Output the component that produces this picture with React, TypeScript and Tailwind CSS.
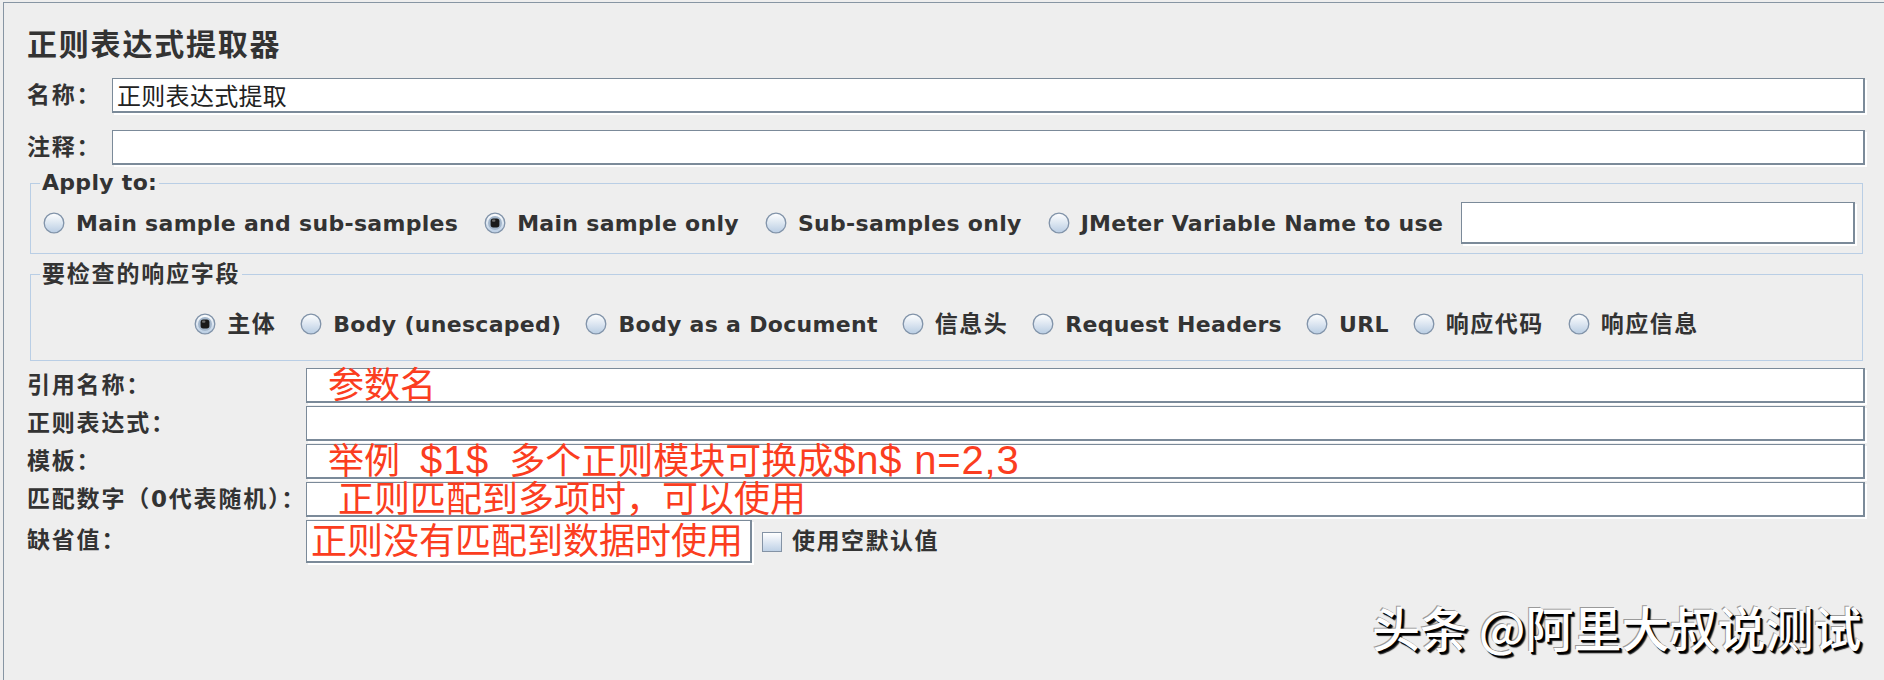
import React from 'react';

function Radio({ checked = false }: { checked?: boolean }) {
  return (
    <svg width="22" height="22" viewBox="0 0 22 22" className="shrink-0">
      <defs>
        <linearGradient id="radioFill" x1="0" y1="0" x2="0" y2="1">
          <stop offset="0" stopColor="#ffffff" />
          <stop offset="1" stopColor="#b9cde3" />
        </linearGradient>
      </defs>
      <circle cx="11" cy="11" r="9.8" fill="url(#radioFill)" stroke="#8193a9" strokeWidth="1.3" />
      {checked && (
        <>
          <circle cx="11" cy="11" r="7" fill="#a3b6cb" />
          <rect x="6.6" y="6.6" width="8.8" height="8.8" rx="2.6" fill="#1a1a1a" />
          <rect x="8" y="7.6" width="3.4" height="2.2" rx="1" fill="#6a6a6a" />
        </>
      )}
    </svg>
  );
}

function Field({ className = '', children }: { className?: string; children?: React.ReactNode }) {
  return (
    <div
      className={
        'bg-white border-t border-l border-b-2 border-r-2 border-[#7b8a99] shadow-[2px_2px_0_#ffffff] flex items-center overflow-visible whitespace-pre ' +
        className
      }
    >
      {children}
    </div>
  );
}

function RadioItem({ label, checked = false, cjk = false }: { label: string; checked?: boolean; cjk?: boolean }) {
  return (
    <div className="flex items-center gap-[11px] shrink-0">
      <Radio checked={checked} />
      {cjk ? (
        <span className="whitespace-pre text-[23px] tracking-[1.5px]">{label}</span>
      ) : (
        <span className="whitespace-pre tracking-[0.3px]">{label}</span>
      )}
    </div>
  );
}

const redText =
  "text-[#fb3d20] text-[36px] font-normal leading-[33px] whitespace-pre font-['Liberation_Sans','Noto_Sans_CJK_SC',sans-serif]";
const latin = 'text-[40px] leading-[33px] tracking-[0.8px]';
const label = 'shrink-0 whitespace-nowrap text-[23px] font-bold tracking-[1.8px]';

export default function App() {
  return (
    <div className="relative w-[1884px] h-[680px] overflow-hidden bg-[#eeeeee] pt-[2px] text-[#333333] font-['DejaVu_Sans','Noto_Sans_CJK_SC',sans-serif]">
      <div className="h-full ml-[3px] border-t border-l border-[#8795a3] pl-[23px] pr-[19px] flex flex-col">
        {/* Title */}
        <div className="mt-[22px] h-[40px] leading-[40px] text-[30px] font-bold tracking-[1.8px]">正则表达式提取器</div>

        {/* Name */}
        <div className="mt-[13px] h-[35px] flex items-center">
          <div className={'w-[85px] ' + label}>名称：</div>
          <Field className="flex-1 h-full pl-[4px]">
            <span className="text-[24px] leading-[30px] font-['Noto_Sans_CJK_SC',sans-serif] text-[#222222] tracking-[0.3px]">正则表达式提取</span>
          </Field>
        </div>

        {/* Comment */}
        <div className="mt-[17px] h-[35px] flex items-center">
          <div className={'w-[85px] ' + label}>注释：</div>
          <Field className="flex-1 h-full" />
        </div>

        {/* Apply to */}
        <fieldset className="mt-[6px] ml-[3px] mr-[2px] border border-[#b9cee5] pl-[12px] pr-[7px] pt-[7px] pb-[9px]">
          <legend className="-ml-[3px] px-[2px] text-[22px] font-bold leading-[24px] tracking-[0.3px]">Apply to:</legend>
          <div className="h-[42px] flex items-center gap-[26px] text-[22px] font-bold">
            <RadioItem label="Main sample and sub-samples" />
            <RadioItem label="Main sample only" checked />
            <RadioItem label="Sub-samples only" />
            <RadioItem label="JMeter Variable Name to use" />
            <Field className="flex-1 h-full -ml-[8px]" />
          </div>
        </fieldset>

        {/* Field to check */}
        <fieldset className="mt-[8px] ml-[3px] mr-[2px] border border-[#b9cee5] px-[12px] pt-[26px] pb-[24px]">
          <legend className="-ml-[3px] px-[2px] text-[23px] font-bold leading-[24px] tracking-[1.8px]">要检查的响应字段</legend>
          <div className="h-[24px] flex items-center justify-center gap-[24px] text-[22px] font-bold">
            <RadioItem label="主体" checked cjk />
            <RadioItem label="Body (unescaped)" />
            <RadioItem label="Body as a Document" />
            <RadioItem label="信息头" cjk />
            <RadioItem label="Request Headers" />
            <RadioItem label="URL" />
            <RadioItem label="响应代码" cjk />
            <RadioItem label="响应信息" cjk />
          </div>
        </fieldset>

        {/* Bottom rows */}
        <div className="mt-[7px] h-[35px] flex items-center">
          <div className={'w-[279px] ' + label}>引用名称：</div>
          <Field className="flex-1 h-full pl-[1px]">
            <span className={redText}>{'  参数名'}</span>
          </Field>
        </div>
        <div className="mt-[3px] h-[35px] flex items-center">
          <div className={'w-[279px] ' + label}>正则表达式：</div>
          <Field className="flex-1 h-full" />
        </div>
        <div className="mt-[3px] h-[35px] flex items-center">
          <div className={'w-[279px] ' + label}>模板：</div>
          <Field className="flex-1 h-full pl-[1px]">
            <span className={redText}>
              {'  举例  '}
              <span className={latin}>$1$</span>
              {'  多个正则模块可换成'}
              <span className={latin}>{'$n$ n=2,3'}</span>
            </span>
          </Field>
        </div>
        <div className="mt-[3px] h-[35px] flex items-center">
          <div className={'w-[279px] ' + label}>匹配数字（0代表随机）：</div>
          <Field className="flex-1 h-full pl-[1px]">
            <span className={redText}>{'   正则匹配到多项时，可以使用'}</span>
          </Field>
        </div>
        <div className="mt-[3px] h-[43px] flex items-start">
          <div className={'w-[279px] mt-[3px] ' + label}>缺省值：</div>
          <Field className="w-[446px] h-full pl-[4px]">
            <span className={redText}>正则没有匹配到数据时使用</span>
          </Field>
          <div className="ml-[10px] self-center flex items-center gap-[10px]">
            <div className="w-[20px] h-[20px] border border-[#8493a5] bg-gradient-to-b from-white to-[#bfd1e6]" />
            <span className="text-[23px] font-bold tracking-[1.5px]">使用空默认值</span>
          </div>
        </div>
      </div>

      {/* Watermark */}
      <div className="absolute left-[1372px] top-[596px] text-[48px] leading-[60px] text-white whitespace-pre font-['Noto_Sans_CJK_SC',sans-serif] font-medium [text-shadow:2px_2px_0_#000000,3px_3px_1px_#222222,-1px_-1px_0_#9a9a9a]">
        头条 @阿里大叔说测试
      </div>
    </div>
  );
}
